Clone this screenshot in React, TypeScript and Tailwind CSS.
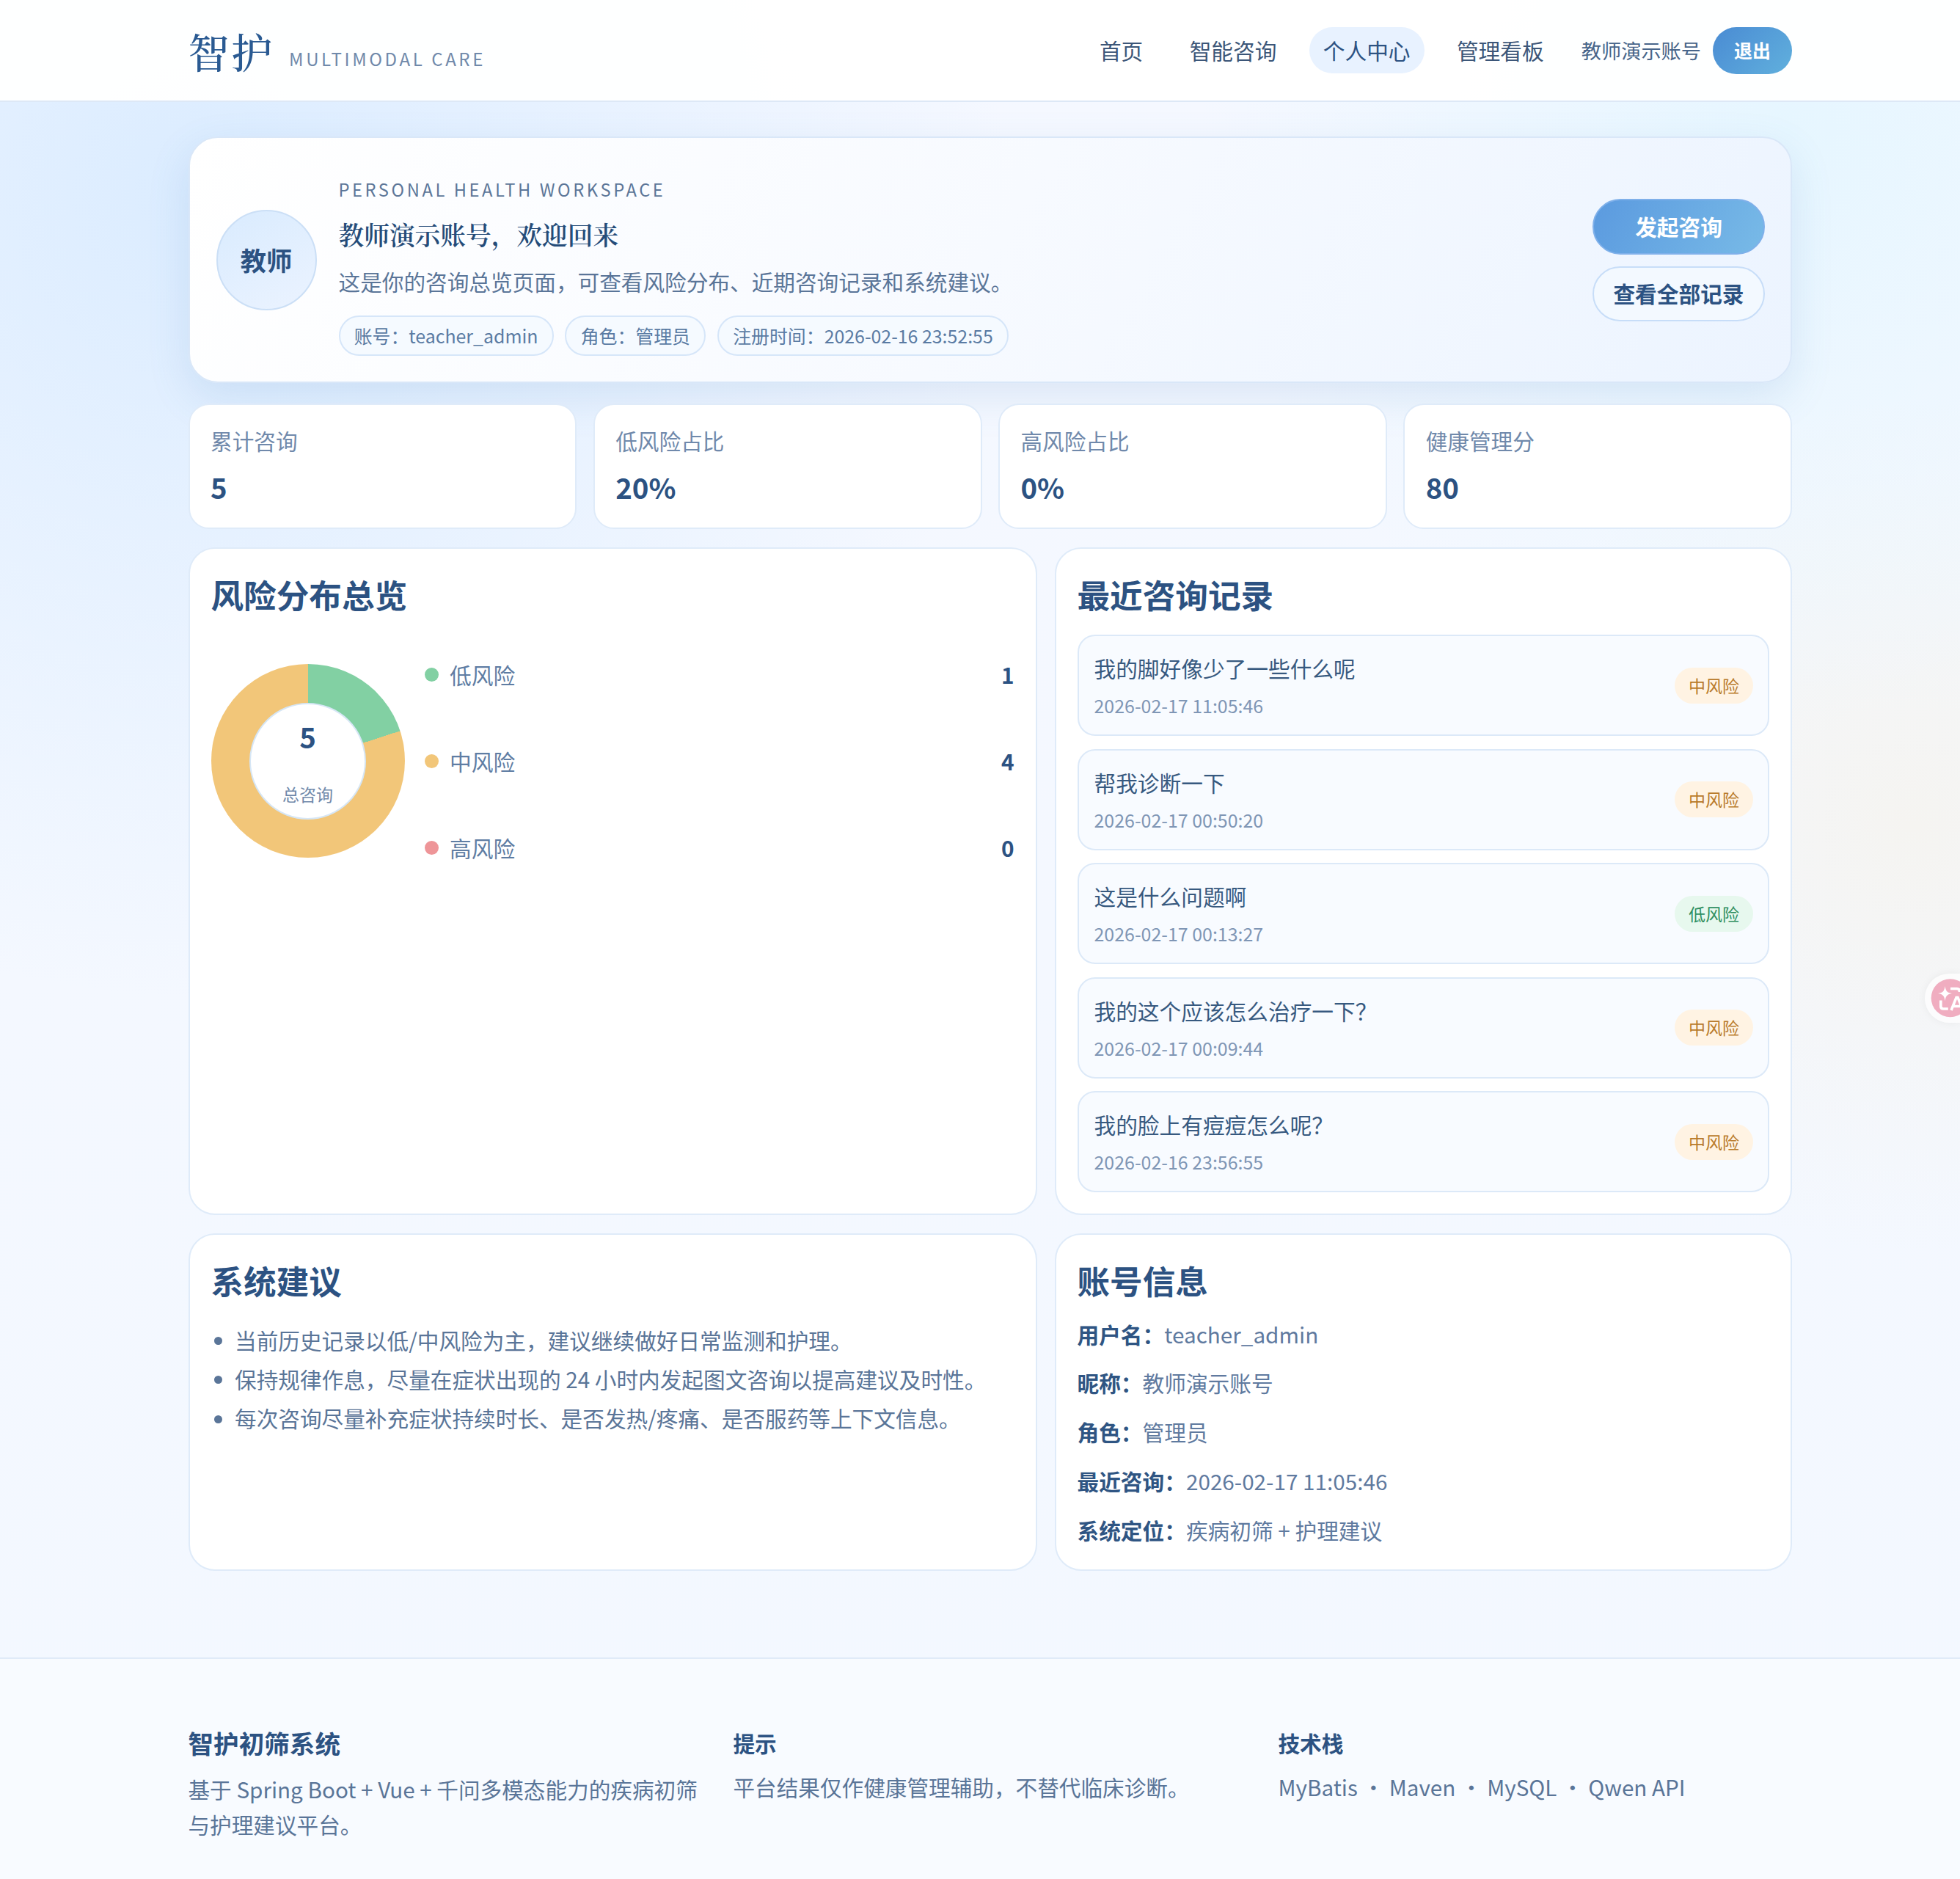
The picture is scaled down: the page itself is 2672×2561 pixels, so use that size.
import React from "react";
import clsx from "clsx";

const SERIF = "font-['Noto_Serif_CJK_SC','Noto_Serif_SC','Source_Han_Serif_SC','Songti_SC','Noto_Sans_CJK_SC',serif]";

const navItems = [
  { label: "首页", active: false },
  { label: "智能咨询", active: false },
  { label: "个人中心", active: true },
  { label: "管理看板", active: false },
];

const chips = ["账号：teacher_admin", "角色：管理员", "注册时间：2026-02-16 23:52:55"];

const stats = [
  { label: "累计咨询", value: "5" },
  { label: "低风险占比", value: "20%" },
  { label: "高风险占比", value: "0%" },
  { label: "健康管理分", value: "80" },
];

const legend = [
  { label: "低风险", value: 1, dot: "bg-[#82d0a3]" },
  { label: "中风险", value: 4, dot: "bg-[#f2c679]" },
  { label: "高风险", value: 0, dot: "bg-[#ee9598]" },
];

const records = [
  { title: "我的脚好像少了一些什么呢", time: "2026-02-17 11:05:46", level: "中风险" },
  { title: "帮我诊断一下", time: "2026-02-17 00:50:20", level: "中风险" },
  { title: "这是什么问题啊", time: "2026-02-17 00:13:27", level: "低风险" },
  { title: "我的这个应该怎么治疗一下？", time: "2026-02-17 00:09:44", level: "中风险" },
  { title: "我的脸上有痘痘怎么呢？", time: "2026-02-16 23:56:55", level: "中风险" },
];

const advice = [
  "当前历史记录以低/中风险为主，建议继续做好日常监测和护理。",
  "保持规律作息，尽量在症状出现的 24 小时内发起图文咨询以提高建议及时性。",
  "每次咨询尽量补充症状持续时长、是否发热/疼痛、是否服药等上下文信息。",
];

const account = [
  { label: "用户名：", value: "teacher_admin" },
  { label: "昵称：", value: "教师演示账号" },
  { label: "角色：", value: "管理员" },
  { label: "最近咨询：", value: "2026-02-17 11:05:46" },
  { label: "系统定位：", value: "疾病初筛 + 护理建议" },
];

function Panel({ title, children }: { title: string; children: React.ReactNode }) {
  return (
    <section className="flex flex-col rounded-[36px] border-2 border-[#dfebf9] bg-white px-[29px]">
      <h2 className="mt-[24px] text-[44.6px] leading-[76px] font-bold text-[#2c5282]">{title}</h2>
      {children}
    </section>
  );
}

function Header() {
  return (
    <header className="h-[139px] border-b-2 border-[#dde8f6] bg-white/95">
      <div className="ml-[256.5px] flex h-[137px] w-[2186.5px] items-center justify-between">
        <div className="flex items-baseline">
          <span className={clsx(SERIF, "text-[56px] leading-[80px] font-medium tracking-[2.8px] text-[#2a5a92]")}>智护</span>
          <span className="relative -top-[3px] ml-[20px] text-[24px] tracking-[3.6px] text-[#7089aa]">MULTIMODAL CARE</span>
        </div>
        <nav className="flex items-center">
          <div className="flex gap-[25px]">
            {navItems.map((n) => (
              <a
                key={n.label}
                className={clsx(
                  "rounded-full px-[19.2px] text-[29.7px] leading-[63px]",
                  n.active ? "bg-[#e8f2ff] text-[#2c5282]" : "text-[#3c5678]"
                )}
              >
                {n.label}
              </a>
            ))}
          </div>
          <span className="ml-8 text-[27.2px] text-[#48658a]">教师演示账号</span>
          <button className="ml-4 h-16 w-[108px] rounded-full bg-linear-135 from-[#4a8bd3] to-[#61b0dd] text-[24.96px] font-bold text-white">
            退出
          </button>
        </nav>
      </div>
    </header>
  );
}

function Hero() {
  return (
    <section className="flex h-[336px] rounded-[40px] border-2 border-[#d9e7f8] bg-linear-120 from-white via-[#f7faff] to-[#ecf4ff] px-[35px] shadow-[0_20px_56px_rgba(74,132,196,0.15)]">
      <div className="ml-px flex size-[137px] shrink-0 items-center justify-center self-center rounded-full border-2 border-[#cbdff6] bg-linear-150 from-[#d9ebfe] to-[#ebf3ff] text-[35.2px] font-bold text-[#2c5282]">
        教师
      </div>
      <div className="ml-[30px] flex flex-col">
        <p className="mt-[50px] text-[23.7px] leading-[40px] tracking-[3.58px] text-[#5c7698]">PERSONAL HEALTH WORKSPACE</p>
        <h1 className={clsx(SERIF, "mt-[11px] text-[34.7px] leading-[60px] font-semibold text-[#254c79]")}>
          教师演示账号，欢迎回来
        </h1>
        <p className="mt-[10px] text-[29.65px] leading-[50px] text-[#5a7598]">
          这是你的咨询总览页面，可查看风险分布、近期咨询记录和系统建议。
        </p>
        <div className="mt-[21px] flex gap-[15.8px]">
          {chips.map((c) => (
            <span
              key={c}
              className="rounded-full border-2 border-[#d6e6f9] bg-[#f5faff] px-[19.2px] text-[24.9px] leading-[51px] text-[#5a7ba3]"
            >
              {c}
            </span>
          ))}
        </div>
      </div>
      <div className="ml-auto flex w-[235px] flex-col justify-center gap-4 text-[29.7px] font-bold">
        <button className="h-[76px] rounded-full border-2 border-[#7fb0ea] bg-linear-120 from-[#5b9adf] to-[#78bae7] pt-px text-white">
          发起咨询
        </button>
        <button className="h-[75px] rounded-full border-2 border-[#c7ddf8] bg-[#f3f9ff] pt-px text-[#2c5282]">查看全部记录</button>
      </div>
    </section>
  );
}

function Donut() {
  return (
    <div className="flex size-[264px] shrink-0 items-center justify-center rounded-full bg-[conic-gradient(#82d0a3_0_20%,#f2c679_20%_100%)]">
      <div className="flex size-[159px] flex-col items-center rounded-full border-2 border-[#d6e6f5] bg-white">
        <span className="mt-[10px] text-[38.4px] leading-[66px] font-bold text-[#2c5282]">5</span>
        <span className="mt-[26px] text-[23.04px] leading-[40px] text-[#7089aa]">总咨询</span>
      </div>
    </div>
  );
}

function TranslateFab() {
  return (
    <div className="absolute top-[1327px] left-[2624px] h-[67px] w-12 overflow-hidden rounded-l-full bg-white/70 shadow-[0_0_12px_rgba(0,0,0,0.05)]">
      <svg viewBox="0 0 48 67" className="block h-[67px] w-12" fill="none">
        <circle cx="34.7" cy="33.2" r="26" fill="#f0adc0" />
        <path d="M27.600 17c1.100 7 2.800 8.900 9.400 10.100-6.600 1.200-8.300 3.100-9.400 10.100-1.100-7-2.800-8.900-9.400-10.100 6.600-1.200 8.300-3.100 9.400-10.100z" fill="#fff" />
        <path d="M35 20.500h9q3.500 0 3.500 4.500" stroke="#fff" strokeWidth="3.600" />
        <path d="M21.800 36.500v8q0 3.500 3.500 3.500h6.500" stroke="#fff" strokeWidth="3.600" />
        <path d="M36 50l7-17.500h2l7 17.500M39 44.500h10" stroke="#fff" strokeWidth="3.600" />
      </svg>
    </div>
  );
}

export default function App() {
  return (
    <div className="relative flex h-[2561px] w-[2672px] flex-col overflow-hidden bg-[radial-gradient(circle_at_270px_260px,#dbecff_0px,rgba(219,236,255,0)_1100px),radial-gradient(circle_at_2440px_180px,#e6f6ff_0px,rgba(230,246,255,0)_800px),radial-gradient(circle_at_2606px_1125px,#f5f4f1_0px,rgba(245,244,241,0)_580px),linear-gradient(#f5f8ff,#f3f8ff)] font-['Noto_Sans_CJK_SC','Noto_Sans',sans-serif]">
      <Header />
      <main className="mt-[47px] ml-[256.5px] w-[2186.5px]">
        <Hero />
        <div className="mt-[28px] grid grid-cols-4 gap-[22.4px]">
          {stats.map((s) => (
            <div key={s.label} className="h-[171px] rounded-[28px] border-2 border-[#dfebf9] bg-white px-[28.5px]">
              <p className="mt-[24px] text-[29.65px] leading-[50px] text-[#7089ab]">{s.label}</p>
              <p className="mt-[3px] text-[38.4px] leading-[68px] font-bold text-[#2c5282]">{s.value}</p>
            </div>
          ))}
        </div>
        <div className="mt-[25px] grid grid-cols-[1157px_1005.5px] grid-rows-[910px_460px] gap-x-6 gap-y-[25px]">
          <Panel title="风险分布总览">
            <div className="mt-[57px] flex gap-[27px]">
              <Donut />
              <ul className="-mt-[11px] flex flex-1 flex-col gap-[68.2px] text-[29.76px] leading-[50px]">
                {legend.map((l) => (
                  <li key={l.label} className="flex items-center">
                    <span className={clsx("size-[19px] rounded-full", l.dot)} />
                    <span className="ml-[15.5px] text-[#5f7da3]">{l.label}</span>
                    <strong className="ml-auto text-[#2c5282]">{l.value}</strong>
                  </li>
                ))}
              </ul>
            </div>
          </Panel>
          <Panel title="最近咨询记录">
            <ul className="mt-[17px] flex flex-col gap-[17.6px]">
              {records.map((r) => (
                <li
                  key={r.time}
                  className="flex h-[138px] items-center justify-between rounded-[24px] border-2 border-[#dce9f8] bg-[#f8fbff] pr-[20px] pl-[21px]"
                >
                  <div>
                    <p className="mt-px text-[29.7px] leading-[50px] text-[#37597f]">{r.title}</p>
                    <p className="mt-[3px] text-[24.96px] leading-[44px] text-[#7f96b5]">{r.time}</p>
                  </div>
                  <span
                    className={clsx(
                      "w-[107px] rounded-full text-center text-[23.04px] leading-[49px]",
                      r.level === "低风险" ? "bg-[#e7f8ee] text-[#2f8f61]" : "bg-[#fff3e3] text-[#b97b2c]"
                    )}
                  >
                    {r.level}
                  </span>
                </li>
              ))}
            </ul>
          </Panel>
          <Panel title="系统建议">
            <ul className="mt-[16.5px] text-[29.65px] leading-[53.4px] text-[#5a7598]">
              {advice.map((a) => (
                <li key={a} className="flex items-center">
                  <span className="relative top-px ml-[4px] size-[11px] rounded-full bg-[#5a7598]" />
                  <span className="ml-[17.5px]">{a}</span>
                </li>
              ))}
            </ul>
          </Panel>
          <Panel title="账号信息">
            <dl className="mt-[10.5px] flex flex-col gap-[16.8px] text-[29.7px] leading-[50px] text-[#5f7a9f]">
              {account.map((a) => (
                <div key={a.label} className="flex">
                  <dt className="font-bold text-[#2f5583]">{a.label}</dt>
                  <dd>{a.value}</dd>
                </div>
              ))}
            </dl>
          </Panel>
        </div>
      </main>
      <footer className="mt-[118px] flex-1 border-t-2 border-[#e0ebf8] bg-[#f8fbff]">
        <div className="ml-[256.5px] grid w-[2185px] grid-cols-3 gap-[44px] text-[29.63px] leading-[47.6px] text-[#5a7598]">
          <div>
            <h3 className="mt-[84px] text-[34.6px] leading-[60px] font-bold text-[#2c5282]">智护初筛系统</h3>
            <p className="mt-[10px]">基于 Spring Boot + Vue + 千问多模态能力的疾病初筛与护理建议平台。</p>
          </div>
          <div>
            <h4 className="mt-[90px] leading-[50px] font-bold text-[#2c5282]">提示</h4>
            <p className="mt-[11px]">平台结果仅作健康管理辅助，不替代临床诊断。</p>
          </div>
          <div>
            <h4 className="mt-[90px] leading-[50px] font-bold text-[#2c5282]">技术栈</h4>
            <p className="mt-[11px]">MyBatis ・ Maven ・ MySQL ・ Qwen API</p>
          </div>
        </div>
      </footer>
      <TranslateFab />
    </div>
  );
}
